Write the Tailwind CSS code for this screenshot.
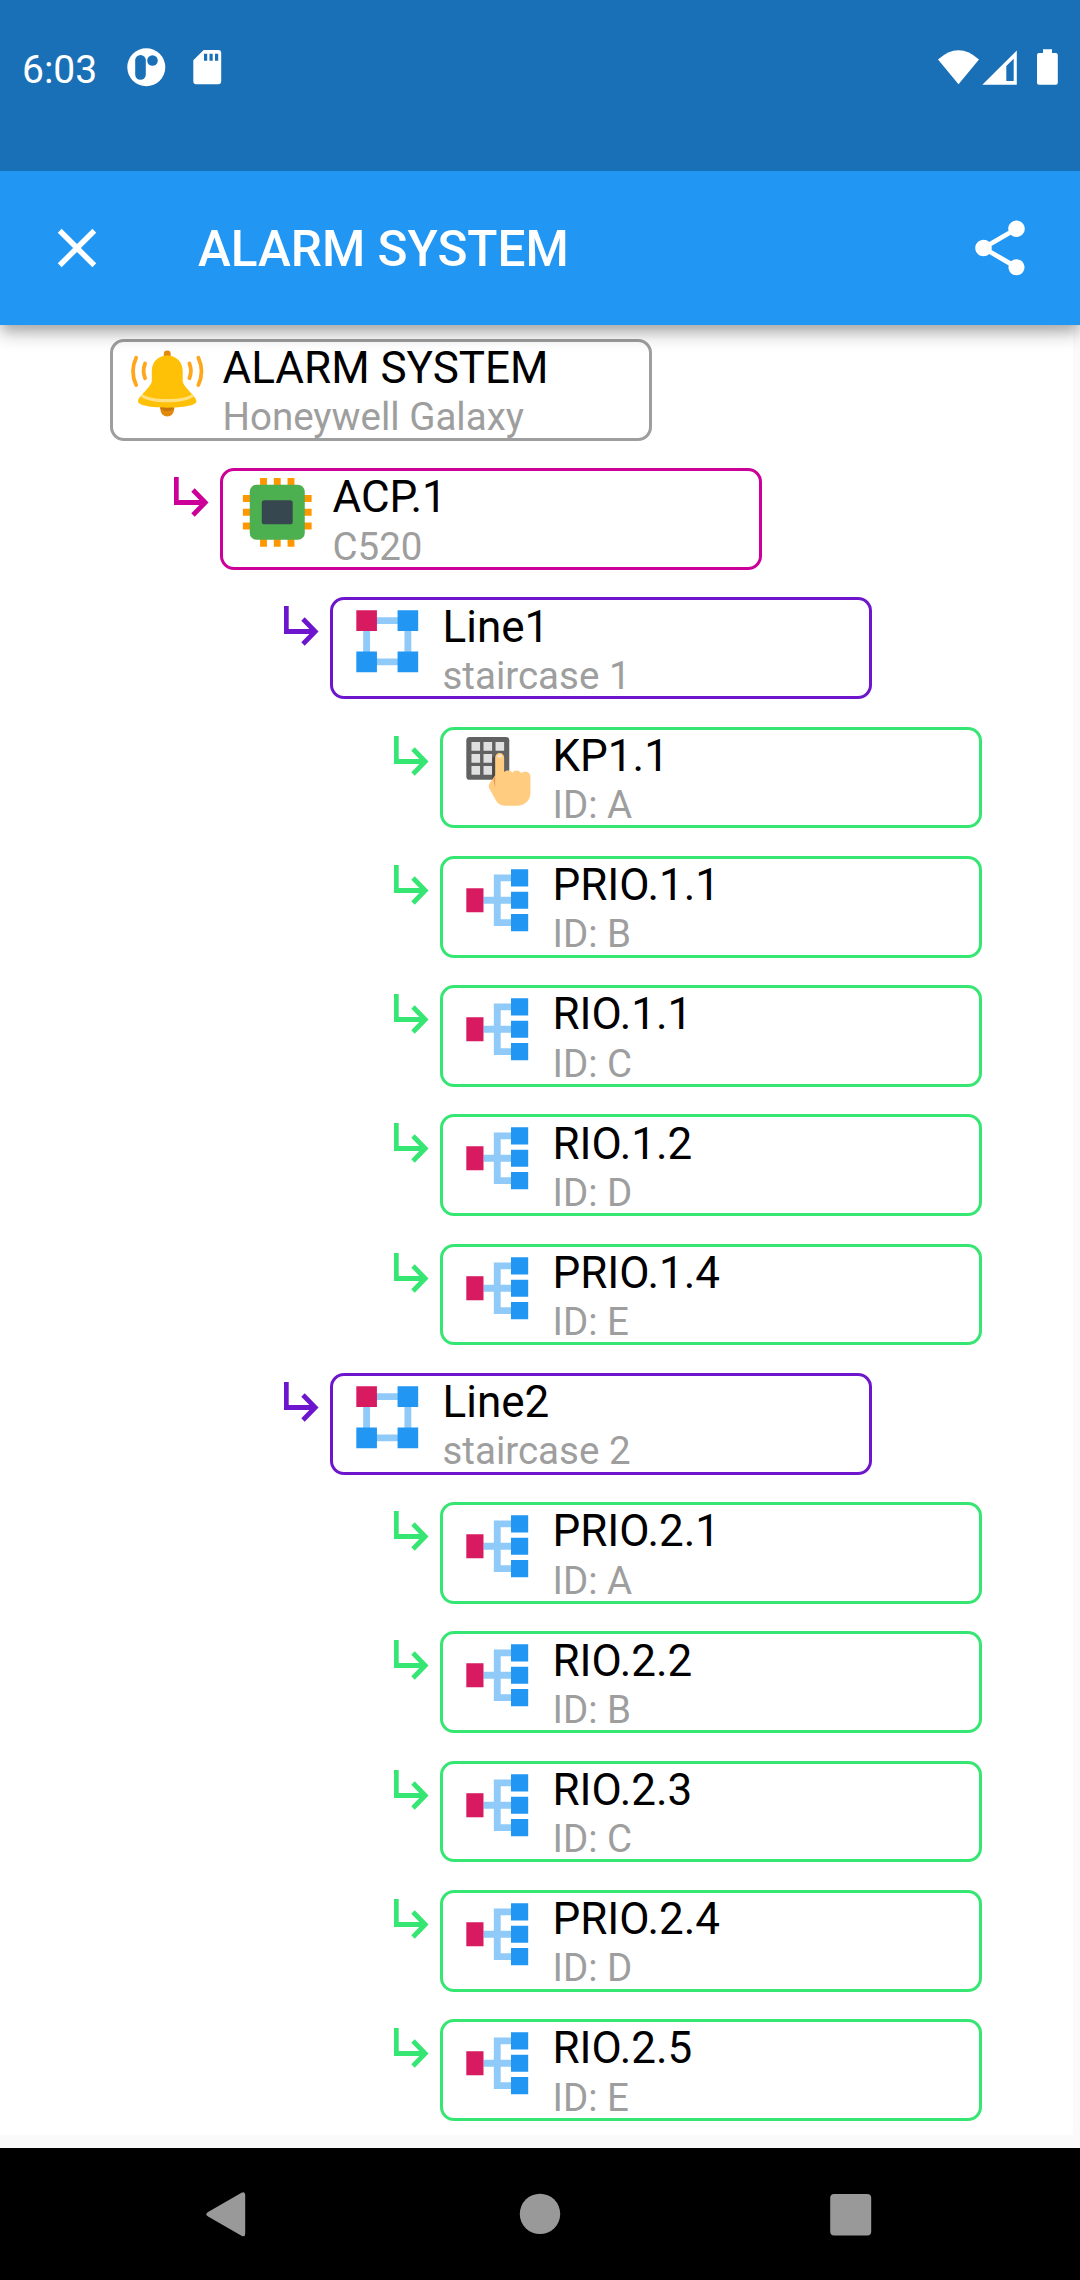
<!DOCTYPE html>
<html lang="en">
<head>
<meta charset="utf-8">
<title>Alarm system</title>
<script src="https://cdn.jsdelivr.net/npm/@tailwindcss/browser@4"></script>
</head>
<body class="w-[1080px] h-[2280px] overflow-hidden flex flex-col bg-[#fafafa] font-['Roboto',sans-serif]">

<svg class="hidden">
  <symbol id="arrow" viewBox="0 0 35 40">
    <path d="M2.300 0V25.500H30.500M19 13L31.200 25.500L19 38" fill="none" stroke="currentColor" stroke-width="4.8"/>
  </symbol>
  <symbol id="bell" viewBox="0 0 48 48">
    <path d="M22 9V7a2 2 0 0 1 4 0v2z" fill="#e08a10"/>
    <path d="M20 37v2.300a4 4 0 0 0 8 0V37z" fill="#e08a10"/>
    <path d="M20 37h8v2q-4 2.500-8 0z" fill="#c77409"/>
    <path d="M24 7.900c-5.500 0-9 4-9 9V22.500c0 3.500-8 9-8 12C7 37 15 38.200 24 38.200S41 37 41 34.500C41 31.500 33 26 33 22.500v-5.600c0-5-3.500-9-9-9z" fill="#ffc107"/>
    <path d="M9.400 30.200C12 32.200 17.500 33.200 24 33.200s12-1 14.600-3l1 1.400C36.500 34.100 31 35.100 24 35.100S11.500 34.100 8.400 31.600z" fill="#ffe082"/>
    <path d="M11.100 12.500q-1.700 4.300 0 8.600M36.900 12.500q1.700 4.300 0 8.600M5.900 9.200q-3.700 7.900 0 15.800M42.100 9.200q3.700 7.900 0 15.800" fill="none" stroke="#ffa61a" stroke-width="2.200" stroke-linecap="round"/>
  </symbol>
  <symbol id="chip" viewBox="0 0 48 48">
    <path d="M14 4h4v40h-4zM22 4h4v40h-4zM30 4h4v40h-4zM4 14h40v4H4zM4 22h40v4H4zM4 30h40v4H4z" fill="#ff9800"/>
    <rect x="8" y="8" width="32" height="32" rx="4" fill="#4caf50"/>
    <rect x="15" y="17" width="18" height="14" rx="1.500" fill="#37474f"/>
  </symbol>
  <symbol id="ring" viewBox="0 0 48 48">
    <path d="M12 12H36V36H12Z" fill="none" stroke="#90caf9" stroke-width="4"/>
    <path d="M6 6h12v12H6z" fill="#d81b60"/>
    <path d="M30 6h12v12H30zM6 30h12v12H6zM30 30h12v12H30z" fill="#2196f3"/>
  </symbol>
  <symbol id="tree" viewBox="0 0 48 48">
    <path d="M16 24H32M34 11H24V37H34" fill="none" stroke="#90caf9" stroke-width="4"/>
    <path d="M6 17h10v14H6z" fill="#d81b60"/>
    <path d="M32 6h10v10H32zM32 19h10v10H32zM32 32h10v10H32z" fill="#2196f3"/>
  </symbol>
  <symbol id="keypad" viewBox="0 0 48 48">
    <rect x="6" y="4" width="25" height="25" rx="2" fill="#616161"/>
    <path d="M9 7h5v5H9zM16 7h5v5h-5zM23 7h5v5h-5zM9 14h5v5H9zM16 14h5v5h-5zM9 21h5v5H9zM16 21h5v5h-5z" fill="#e0e0e0"/>
    <path d="M21 16l2-1v14h-2z" fill="#424242" opacity=".7"/>
    <path d="M22.800 16a2.600 2.600 0 0 1 5.200 0v8.600c.8-1.300 3.700-1.400 4.800.3 1.300-1.900 4.200-1.700 5.100.2 2.100-1.700 5.400-.8 5.400 2V36.500c0 4.500-3.200 7.500-7.700 7.500H28.500c-2.800 0-4.300-1.200-5.500-3.400l-3.500-6.200c-.8-1.500-.5-2.400.2-3.500l3.100-4.500z" fill="#ffcc80"/>
    <path d="M22.800 26.400v7.300l-1-4.900z" fill="#e59a5c"/>
    <path d="M24 15.600a1.400 1.400 0 0 1 2.800 0q-1.400 1-2.800 0z" fill="#ffe4d6"/>
  </symbol>
</svg>

<header class="h-[171px] shrink-0 bg-[#1a70b7] flex items-start pt-[44px] pl-[22px] text-white">
  <span class="w-[104px] pt-[3px] text-[39px] leading-[46px]">6:03</span>
  <svg class="w-[41px] h-[46px]" viewBox="126 44 41 46">
    <circle cx="146.300" cy="67.200" r="19" fill="#fff"/>
    <rect x="135.200" y="55" width="10.600" height="24.700" rx="5.300" fill="#1a70b7"/>
    <circle cx="152.500" cy="60.500" r="5.300" fill="#1a70b7"/>
  </svg>
  <svg class="ml-6 w-[34px] h-[46px]" viewBox="191 44 34 46">
    <path d="M203.700 50H218.200a3 3 0 0 1 3 3V81.300a3 3 0 0 1-3 3H196.300a3 3 0 0 1-3-3V60.300Z" fill="#fff"/>
    <path d="M204 53.700h3.200v7h-3.200zM209.500 53.700h3.200v7h-3.200zM215 53.700h3.200v7h-3.200z" fill="#1a70b7"/>
  </svg>
  <svg class="ml-auto w-[145px] h-[46px]" viewBox="935 44 145 46" fill="#fff">
    <path d="M938 59.500Q958.500 41 979 59.500L958.500 84.300Z"/>
    <path fill-rule="evenodd" d="M1016.800 50.500V84.700H982.300ZM1013.700 58.700L1006.300 66V81H1013.700Z"/>
    <path d="M1043 49.300h9V53h3.800a2 2 0 0 1 2 2V82.700a2 2 0 0 1-2 2h-16.800a2 2 0 0 1-2-2V55a2 2 0 0 1 2-2h4z"/>
  </svg>
</header>

<div class="relative z-10 h-[154px] shrink-0 bg-[#2196f3] flex items-center pl-[44px] pr-[47px] text-white shadow-[0_5.5px_11px_-2.75px_rgba(0,0,0,0.2),0_11px_13.75px_0_rgba(0,0,0,0.14),0_2.75px_27.5px_0_rgba(0,0,0,0.12)] [clip-path:inset(0_0_-40px_0)]">
  <svg class="w-[66px] h-[66px]" viewBox="0 0 24 24" fill="#fff"><path d="M19 6.410L17.590 5 12 10.590 6.410 5 5 6.410 10.590 12 5 17.590 6.410 19 12 13.410 17.590 19 19 17.590 13.410 12z"/></svg>
  <h1 class="ml-[88px] pt-[2px] text-[49.5px] leading-[58px] font-medium whitespace-nowrap">ALARM SYSTEM</h1>
  <svg class="ml-auto w-[66px] h-[66px]" viewBox="0 0 24 24" fill="#fff"><path d="M18 16.080c-.76 0-1.440.3-1.960.77L8.910 12.700c.05-.23.090-.46.090-.7s-.04-.47-.09-.7l7.050-4.110c.54.5 1.250.81 2.040.81 1.660 0 3-1.340 3-3s-1.340-3-3-3-3 1.340-3 3c0 .24.040.47.090.7L8.040 9.810C7.500 9.310 6.790 9 6 9c-1.660 0-3 1.340-3 3s1.340 3 3 3c.79 0 1.500-.31 2.040-.81l7.120 4.160c-.05.21-.08.43-.08.65 0 1.610 1.310 2.920 2.920 2.920 1.610 0 2.920-1.310 2.920-2.920s-1.310-2.920-2.920-2.920z"/></svg>
</div>

<main id="list" class="w-[1073px] h-[1810px] shrink-0 bg-white pt-[13.75px] flex flex-col gap-[27.5px]"></main>

<nav class="mt-auto h-[132px] shrink-0 bg-black">
  <svg class="w-[1080px] h-[132px]" viewBox="0 2148 1080 132" fill="#999">
    <path d="M208.500 2211.800L241.500 2192.700Q245.200 2191 245.200 2195V2233.500Q245.200 2237.500 241.500 2235.800L208.500 2216.700Q204 2214.200 208.500 2211.800Z"/>
    <circle cx="540" cy="2213.900" r="20.200"/>
    <rect x="830.200" y="2194" width="41" height="41.500" rx="4"/>
  </svg>
</nav>

<script>
const levels = [
  { row: 'pl-[64px]', color: 'text-[#9e9e9e]' },
  { row: 'pl-[174px]', color: 'text-[#cc0099]' },
  { row: 'pl-[284px]', color: 'text-[#6e16ce]' },
  { row: 'pl-[394px]', color: 'text-[#36e672]' }
];
const items = [
  [0, 'bell', 'ALARM SYSTEM', 'Honeywell Galaxy'],
  [1, 'chip', 'ACP.1', 'C520'],
  [2, 'ring', 'Line1', 'staircase 1'],
  [3, 'keypad', 'KP1.1', 'ID: A'],
  [3, 'tree', 'PRIO.1.1', 'ID: B'],
  [3, 'tree', 'RIO.1.1', 'ID: C'],
  [3, 'tree', 'RIO.1.2', 'ID: D'],
  [3, 'tree', 'PRIO.1.4', 'ID: E'],
  [2, 'ring', 'Line2', 'staircase 2'],
  [3, 'tree', 'PRIO.2.1', 'ID: A'],
  [3, 'tree', 'RIO.2.2', 'ID: B'],
  [3, 'tree', 'RIO.2.3', 'ID: C'],
  [3, 'tree', 'PRIO.2.4', 'ID: D'],
  [3, 'tree', 'RIO.2.5', 'ID: E']
];
document.getElementById('list').innerHTML = items.map(([level, icon, title, sub]) => `
  <div class="flex h-[101.75px] shrink-0 ${levels[level].row} ${levels[level].color}">
    <div class="w-[46px] pt-[9px]">${level ? '<svg class="w-[35px] h-[40px]"><use href="#arrow"/></svg>' : ''}</div>
    <div class="w-[541.75px] h-full flex border-[3px] border-current rounded-[14px] pl-[13px]">
      <svg class="w-[82.5px] h-[82.5px] shrink-0"><use href="#${icon}"/></svg>
      <div class="ml-[14px] pt-[1.25px] whitespace-nowrap">
        <div class="text-[44px] leading-[50px] text-black">${title}</div>
        <div class="mt-[1.25px] text-[38.5px] leading-[46px] text-[#9e9e9e]">${sub}</div>
      </div>
    </div>
  </div>`).join('');
</script>
</body>
</html>
